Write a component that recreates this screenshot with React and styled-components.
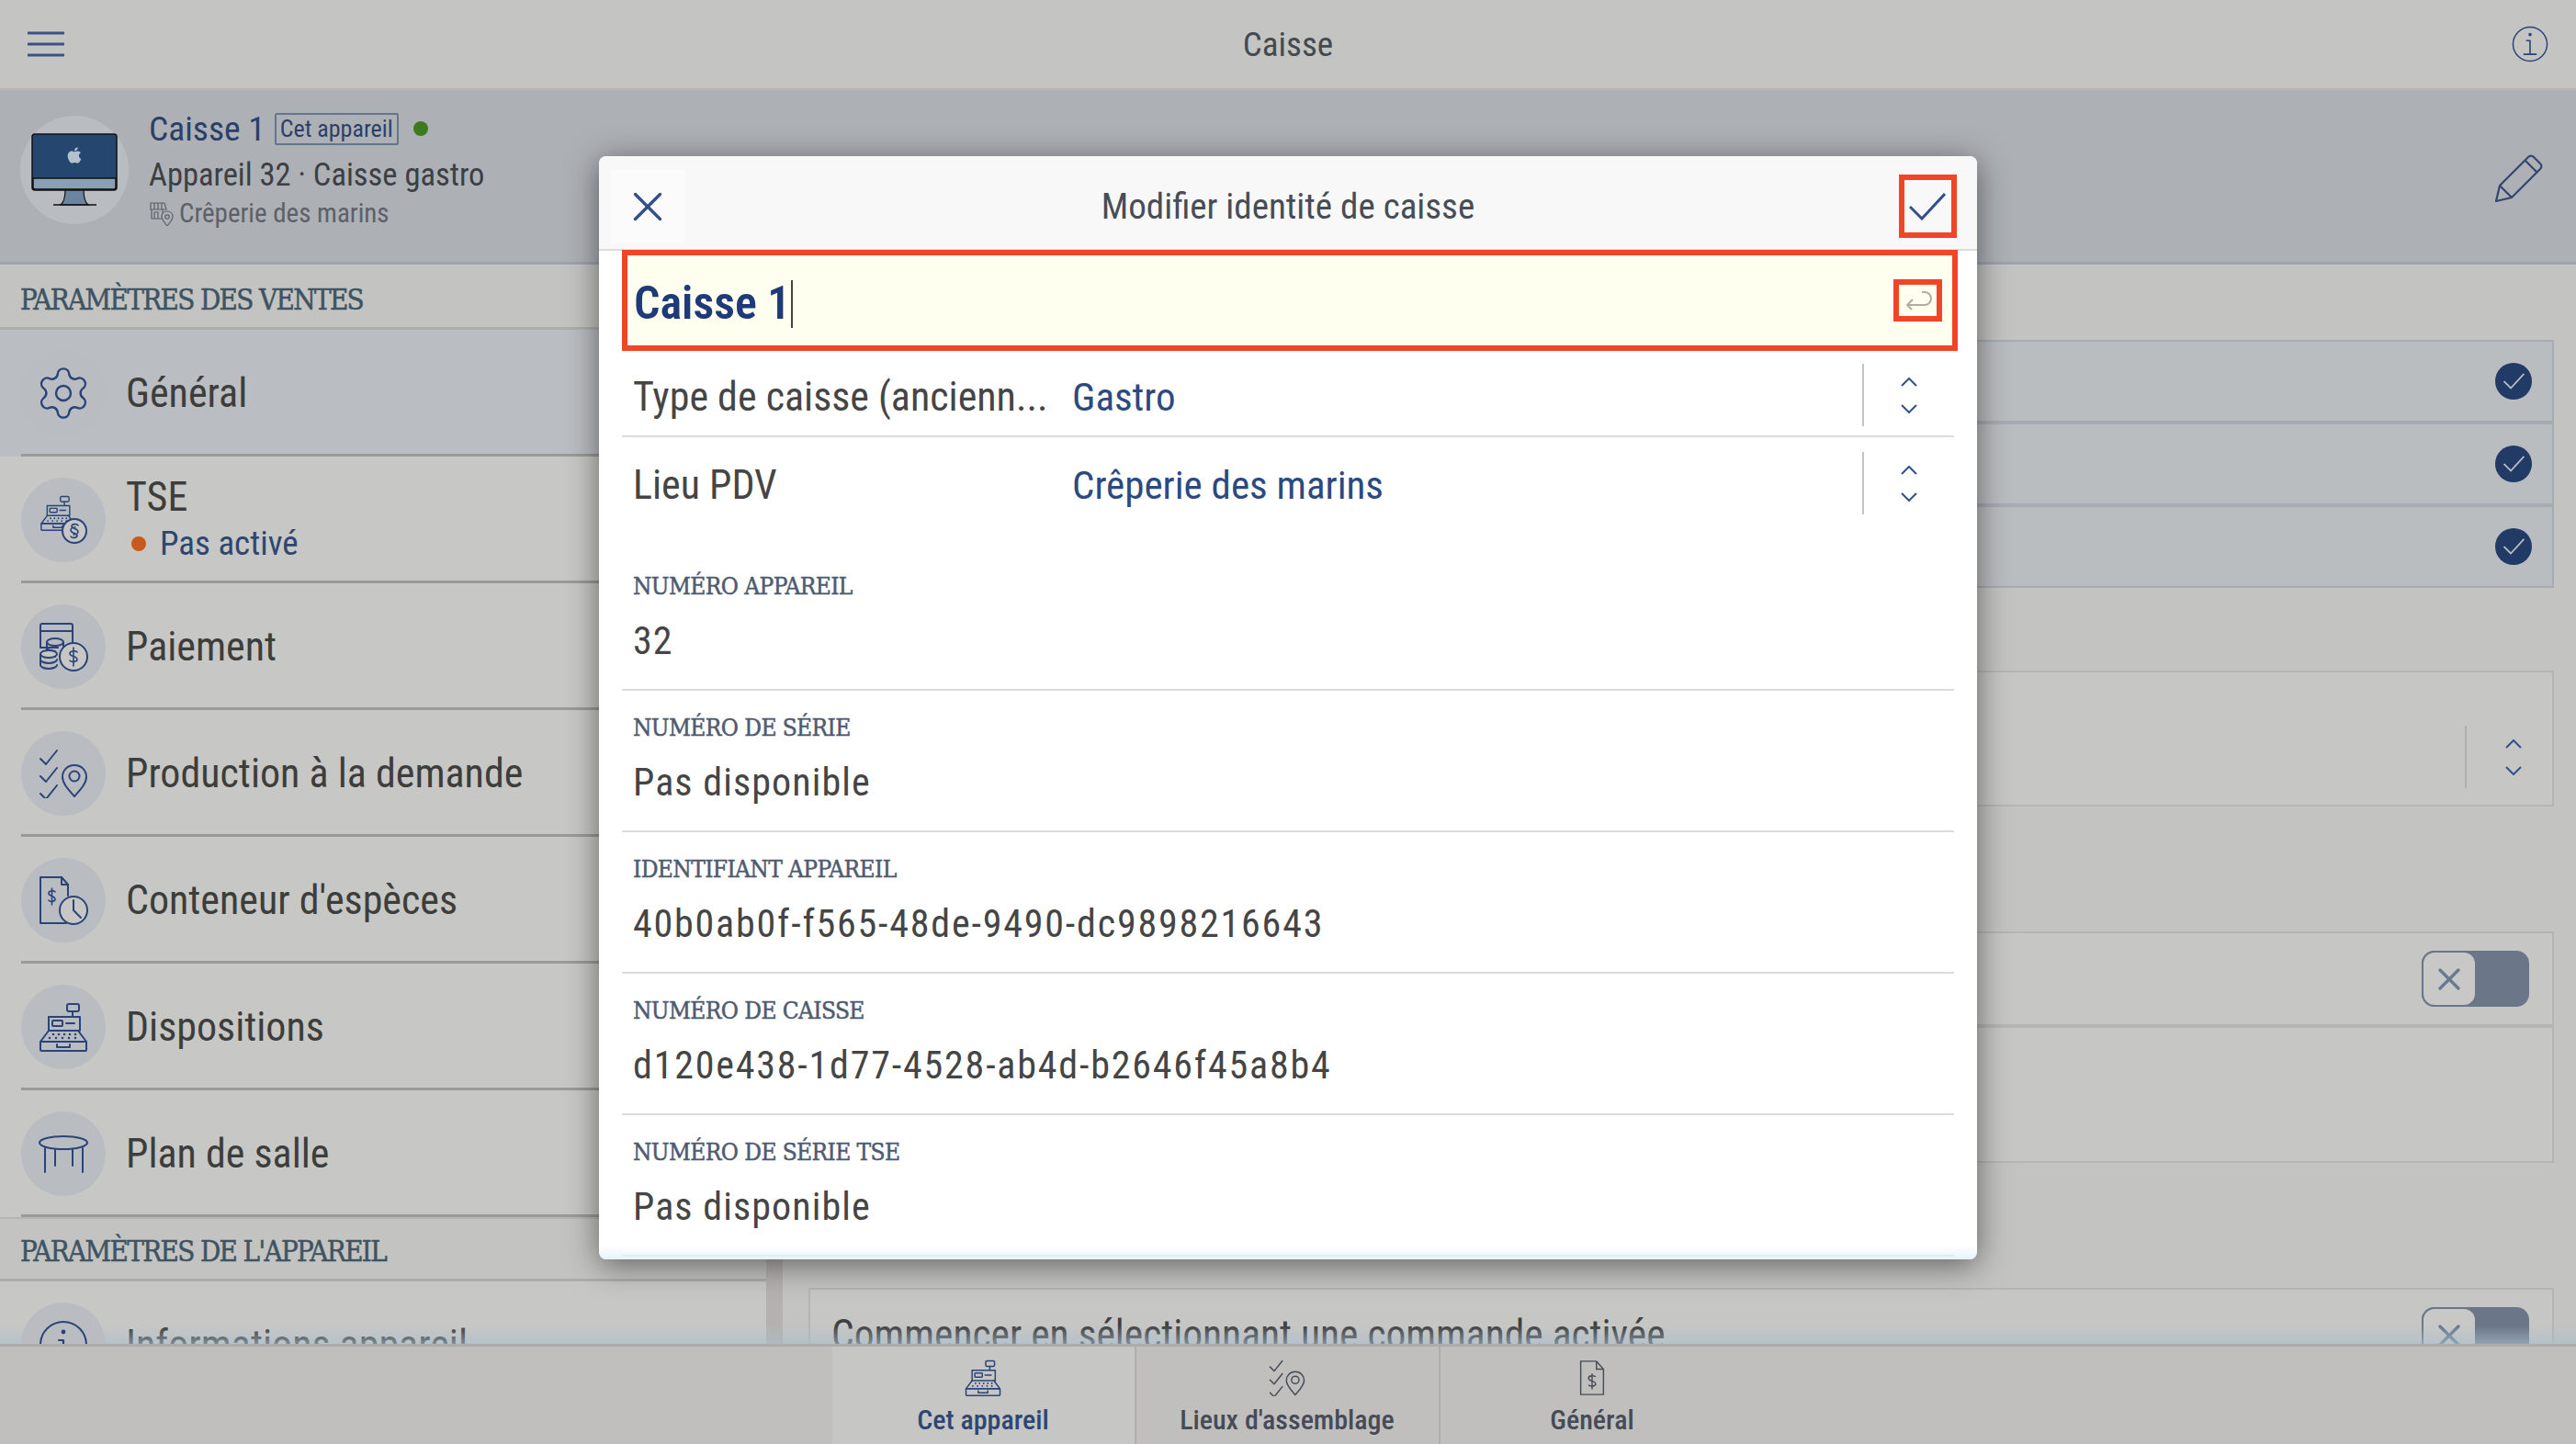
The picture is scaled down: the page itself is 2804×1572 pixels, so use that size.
import React from 'react'
import styled, { createGlobalStyle } from 'styled-components'
import { Settings, X } from 'lucide-react'
import { FaApple } from 'react-icons/fa'

const NAVY = '#2a4478'
const SERIF = '"DejaVu Serif Condensed", "DejaVu Serif", serif'

const GlobalStyle = createGlobalStyle`
  html, body { margin: 0; padding: 0; background: #c3c3c1; }
  body {
    font-family: "Roboto", "Open Sans", sans-serif;
    font-stretch: 75%;
    color: #3f3f3d;
  }
  * { box-sizing: border-box; }
`

const Page = styled.div`
  position: relative;
  width: 2804px;
  height: 1572px;
  display: flex;
  flex-direction: column;
  overflow: hidden;
`

const TopBar = styled.header`
  height: 99px;
  flex: none;
  display: flex;
  align-items: center;
  justify-content: space-between;
  padding: 0 30px;
  background: #c4c4c2;
  border-bottom: 3px solid #b6b4b2;
`
const TopTitle = styled.div`
  font-size: 37px;
  color: #454a50;
`

const DeviceHeader = styled.section`
  height: 189px;
  flex: none;
  display: flex;
  align-items: flex-start;
  justify-content: space-between;
  padding: 27px 36px 0 22px;
  background: #adb0b5;
  border-bottom: 3px solid #9ea3ad;
`
const DeviceInfo = styled.div`
  display: flex;
  gap: 22px;
`
const AvatarBig = styled.div`
  width: 118px;
  height: 118px;
  border-radius: 50%;
  background: #b9bcc1;
`
const DeviceText = styled.div`
  display: flex;
  flex-direction: column;
  margin-top: -11px;
`
const NameLine = styled.div`
  display: flex;
  align-items: center;
  gap: 10px;
  height: 50px;
`
const DeviceName = styled.span`
  font-size: 37.500px;
  color: #2c3f69;
`
const Badge = styled.span`
  height: 35px;
  width: 135px;
  display: flex;
  align-items: center;
  justify-content: center;
  font-size: 26px;
  color: #2c3f69;
  border: 2px solid #62778c;
  border-radius: 2px;
`
const Dot = styled.span`
  width: 16px;
  height: 16px;
  flex: none;
  margin-left: 6px;
  border-radius: 50%;
  background: ${p => p.$color};
`
const DeviceSub = styled.div`
  font-size: 34.500px;
  line-height: 50px;
  color: #3c3f44;
`
const DevicePlace = styled.div`
  display: flex;
  align-items: center;
  gap: 6px;
  font-size: 29px;
  line-height: 34px;
  color: #5c6169;
`
const PencilSlot = styled.div`
  margin-top: 42px;
`

const Main = styled.main`
  flex: 1;
  min-height: 0;
  display: flex;
  overflow: hidden;
`
const Sidebar = styled.nav`
  width: 834px;
  flex: none;
  background: #c7c7c5;
`
const SectionHead = styled.div`
  height: ${p => p.$h}px;
  display: flex;
  align-items: center;
  padding: ${p => p.$shift}px 0 0 22px;
  font-family: ${SERIF};
  font-stretch: normal;
  font-size: 31px;
  letter-spacing: -1.650px;
  -webkit-text-stroke: 0.5px #3e5462;
  color: #3e5462;
  background: #c3c3c1;
  border-top: ${p => (p.$top ? '2px solid #b5b5b3' : 'none')};
  border-bottom: 3px solid #adadab;
`
const MenuRow = styled.div`
  height: 138px;
  display: flex;
  align-items: center;
  gap: 22px;
  padding-left: 23px;
  background: ${p => (p.$selected ? '#babdc1' : 'transparent')};
`
const MenuInner = styled.div`
  flex: 1;
  align-self: stretch;
  display: flex;
  flex-direction: column;
  justify-content: center;
  margin-left: -114px;
  padding: 3px 0 0 114px;
  border-bottom: 3px solid #9a9a98;
`
const IconCircle = styled.div`
  position: relative;
  z-index: 1;
  width: 92px;
  height: 92px;
  flex: none;
  display: flex;
  align-items: center;
  justify-content: center;
  border-radius: 50%;
  background: #b9bdc2;
`
const MenuLabel = styled.div`
  font-size: 44px;
  font-weight: 450;
  line-height: 52px;
  color: #3d3d3b;
`
const MenuState = styled.div`
  display: flex;
  align-items: center;
  gap: 15px;
  font-size: 37px;
  line-height: 50px;
  color: #2f4670;
`

const ScrollGutter = styled.div`
  width: 18px;
  flex: none;
  background: #b4b2b0;
`
const Panel = styled.div`
  flex: 1;
  padding: 82px 24px 0 28px;
  display: flex;
  flex-direction: column;
  background: #c3c3c1;
`
const CardGroup = styled.div`
  display: flex;
  flex-direction: column;
  margin-bottom: ${p => p.$after}px;
`
const Card = styled.div`
  height: ${p => p.$h}px;
  flex: none;
  display: flex;
  align-items: center;
  justify-content: space-between;
  padding: 0 ${p => (p.$flush ? 0 : 22)}px 0 23px;
  background: ${p => (p.$selected ? '#babdbf' : '#c6c6c4')};
  border: 2px solid ${p => (p.$selected ? '#a7abb2' : '#b5b5b3')};
  font-size: 43.500px;
  color: #3f4042;
  white-space: nowrap;
`
const CheckedMark = styled.span`
  width: 40px;
  height: 40px;
  display: flex;
  align-items: center;
  justify-content: center;
  border-radius: 50%;
  background: #213a66;
`
const Toggle = styled.div`
  width: 117px;
  height: 61px;
  flex: none;
  margin-right: 3px;
  border-radius: 14px;
  background: #6b7688;
`
const ToggleKnob = styled.div`
  width: 60px;
  height: 61px;
  display: flex;
  align-items: center;
  justify-content: center;
  border: 2px solid #6b7688;
  border-radius: 14px;
  background: #c8c8c6;
  color: #687990;
`
const Picker = styled.div`
  width: 100px;
  height: 68px;
  flex: none;
  display: flex;
  flex-direction: column;
  align-items: center;
  justify-content: center;
  gap: 19px;
  border-left: 2px solid #c4c4c4;
`
const CardPicker = styled(Picker)`
  width: 95px;
  padding-left: 8px;
  align-self: flex-end;
  margin-bottom: 18px;
  border-left-color: #b0b0ae;
`

const BottomBar = styled.footer`
  position: relative;
  height: 109px;
  flex: none;
  display: flex;
  justify-content: center;
  background: #c0bfbd;
  border-top: 3px solid #aeacaa;
  &::before {
    content: '';
    position: absolute;
    left: 0;
    right: 0;
    top: -23px;
    height: 20px;
    background: linear-gradient(rgba(170, 190, 205, 0), rgba(170, 190, 205, 0.6));
  }
`
const Tab = styled.div`
  width: 331px;
  display: flex;
  flex-direction: column;
  align-items: center;
  padding-top: 14px;
  background: ${p => (p.$active ? '#c6c6c4' : 'transparent')};
  border-right: 2px solid #aeaeac;
  font-size: 30px;
  font-weight: 500;
  line-height: 52px;
  color: ${p => (p.$active ? '#2e4674' : '#454c58')};
  &:last-child { border-right: none; }
`

const Scrim = styled.div`
  position: absolute;
  inset: 0;
  display: flex;
  justify-content: center;
  align-items: flex-start;
  padding-top: 170px;
`
const Modal = styled.div`
  position: relative;
  width: 1500px;
  height: 1201px;
  display: flex;
  flex-direction: column;
  overflow: hidden;
  background: #fff;
  border-radius: 8px;
  box-shadow: 0 6px 34px rgba(0, 0, 0, 0.5);
  &::after {
    content: '';
    position: absolute;
    left: 0;
    right: 0;
    bottom: 0;
    height: 14px;
    background: linear-gradient(rgba(228, 243, 251, 0), #e4f3fb);
  }
`
const ModalHead = styled.div`
  height: 103px;
  flex: none;
  display: flex;
  align-items: center;
  justify-content: space-between;
  padding: 8px 22px 0 13px;
  background: #f8f8f8;
  border-bottom: 2px solid #dcdcdc;
`
const ModalTitle = styled.div`
  margin-right: 8px;
  font-size: 39px;
  color: #474d55;
`
const HeadButton = styled.div`
  width: 80px;
  height: 80px;
  display: flex;
  align-items: center;
  justify-content: center;
  background: #fbfbfb;
  color: #33508a;
`
const Marked = styled.div`
  width: 63px;
  height: 69px;
  display: flex;
  align-items: center;
  justify-content: center;
  border: 6px solid #f04526;
`
const NameInput = styled.div`
  height: 110px;
  flex: none;
  margin: -1px 21px 0 25px;
  display: flex;
  align-items: center;
  justify-content: space-between;
  padding: 0 9px 0 7px;
  background: #ffffef;
  border: 6px solid #f04526;
  font-size: 50px;
  font-weight: 600;
  color: #1f3a78;
`
const InputText = styled.span`
  padding-top: 5px;
`
const Caret = styled.span`
  display: inline-block;
  width: 2px;
  height: 52px;
  margin-left: 1px;
  vertical-align: -10px;
  background: #444;
`
const ReturnMark = styled.div`
  width: 53px;
  height: 46px;
  display: flex;
  align-items: center;
  justify-content: center;
  border: 6px solid #f04526;
  margin-right: 2px;
`
const SelectRow = styled.div`
  height: ${p => p.$h}px;
  flex: none;
  margin: 0 25px;
  padding: ${p => p.$pad}px 0 0 12px;
  display: flex;
  align-items: flex-start;
  border-bottom: ${p => (p.$line ? '2px solid #dcdcdc' : 'none')};
`
const SelectLabel = styled.div`
  width: 478px;
  flex: none;
  font-size: 44px;
  font-weight: 450;
  line-height: 72px;
  white-space: nowrap;
  color: #454545;
`
const SelectValue = styled.div`
  flex: 1;
  font-size: 43px;
  line-height: 72px;
  color: #2c4a80;
`
const Field = styled.div`
  height: 154px;
  flex: none;
  margin: 0 25px;
  padding: 21px 0 0 12px;
  border-bottom: 2px solid #dcdcdc;
`
const FieldLabel = styled.div`
  height: 38px;
  font-family: ${SERIF};
  font-stretch: normal;
  font-size: 26px;
  line-height: 38px;
  letter-spacing: -0.600px;
  -webkit-text-stroke: 0.5px #4f5b70;
  color: #4f5b70;
`
const FieldValue = styled.div`
  margin-top: 18px;
  font-size: 42px;
  line-height: 46px;
  letter-spacing: ${p => (p.$code ? 1.8 : 1.1)}px;
  color: #454545;
`

// small line icons, all on a 54 grid
const Line = ({ size = 54, children, color = NAVY }) => (
  <svg width={size} height={size} viewBox="0 0 54 54" fill="none" stroke={color} strokeWidth="2" strokeLinecap="round" strokeLinejoin="round">
    {children}
  </svg>
)

const Register = () => (
  <g>
    <rect x="31" y="2" width="13" height="8" rx="2" />
    <path d="M37 10v6" />
    <path d="M11 16h34v15H11z" />
    <rect x="15" y="20" width="11" height="6" rx="1" />
    <path d="M30 23h9" />
    <path d="M11 31L2 43h50l-9-12" />
    <path d="M16 35h0M22 35h0M28 35h0M34 35h0M40 35h0M12 39h0M19 39h0M26 39h0M33 39h0M40 39h0" strokeWidth="2.6" />
    <rect x="2" y="43" width="50" height="10" rx="1" />
    <path d="M20 46v3h14v-3" />
  </g>
)
const Checks = () => (
  <g>
    <path d="M2 11l6 6L20 2M2 30l6 6 12-15M2 49l6 6 12-15" />
    <path d="M39 22c-8 0-13 6-13 13 0 7 7 14 13 21 6-7 13-14 13-21 0-7-5-13-13-13z" transform="translate(0 -4)" />
    <circle cx="39" cy="30" r="5.5" />
  </g>
)
const IconTse = () => (
  <Line>
    <g transform="scale(.72) translate(2 0)"><Register /></g>
    <circle cx="39" cy="39" r="13" fill="#c7c7c5" />
    <path d="M43 33c-1-2-7-2-7 1 0 3 7 2 7 6 0 2-3 3-5 3M35 45c1 2 7 2 7-1 0-3-7-2-7-6 0-2 3-3 5-3" strokeWidth="1.6" />
  </Line>
)
const IconPay = () => (
  <Line>
    <path d="M21 28H2V4a2 2 0 0 1 2-2h31a2 2 0 0 1 2 2v21M2 10h35" />
    <ellipse cx="18" cy="22" rx="9" ry="4" />
    <path d="M9 22v12c0 2 4 4 9 4M27 22v6M9 28c0 2 4 4 9 4" />
    <ellipse cx="11" cy="35" rx="9" ry="4" fill="#c7c7c5" />
    <path d="M2 35v12c0 2 4 4 9 4s9-2 9-4M2 41c0 2 4 4 9 4s9-2 9-4" />
    <circle cx="38" cy="38" r="15" fill="#c7c7c5" />
    <path d="M42 33c-1-2-8-2-8 1.500 0 4 8 2 8 6.500 0 3-7 3-8 1M38 28v20" strokeWidth="1.6" />
  </Line>
)
const IconCash = () => (
  <Line>
    <path d="M30 52H2V2h23l7 8v12" />
    <path d="M25 2v8h7" />
    <path d="M18 18c-1-2-7-2-7 1.500 0 4 7 2 7 6.500 0 3-6 3-7 1M14.500 14v18" strokeWidth="1.6" />
    <circle cx="38" cy="38" r="15" fill="#c7c7c5" />
    <path d="M38 27v11l8 8" />
  </Line>
)
const IconTable = () => (
  <Line>
    <ellipse cx="27" cy="15" rx="26" ry="7" />
    <path d="M7 21v26M48 21v26M18 22v18M37 22v18" />
  </Line>
)
const IconInfo = ({ size = 54 }) => (
  <Line size={size}>
    <circle cx="27" cy="27" r="25" />
    <path d="M27 22v20M18 42h18M22 22h5" strokeWidth="2.2" />
    <circle cx="27" cy="13" r="1.400" fill={NAVY} />
  </Line>
)
const Store = () => (
  <svg width="27" height="27" viewBox="0 0 27 27" fill="none" stroke="#5c6169" strokeWidth="1.200">
    <path d="M2 9V2h15l2 7zM2 9h17M6 2v7M10 2v7M14 2v7" />
    <path d="M3 9v10h12V9M6 19v-7h4v7" />
    <path d="M20 11c-4 0-6 3-6 6s3 6 6 10c3-4 6-7 6-10s-2-6-6-6z" fill="#adb0b5" />
    <circle cx="20" cy="17" r="2.200" />
  </svg>
)
const Monitor = () => (
  <svg width="118" height="118" viewBox="0 0 118 118">
    <path d="M49 80h20c0 8 1 14 5 17H44c4-3 5-9 5-17z" fill="#6a85a0" stroke="#111" strokeWidth="1.200" />
    <path d="M36 97h47" stroke="#111" strokeWidth="1.500" />
    <rect x="13" y="20" width="92" height="61" rx="3" fill="#24466f" stroke="#111" strokeWidth="1.500" />
    <path d="M14 68h90v10a2 2 0 0 1-2 2H16a2 2 0 0 1-2-2z" fill="#87a0b2" stroke="#111" strokeWidth="1.500" />
    <FaApple x="49" y="33" size={20} color="#b4c2ce" />
  </svg>
)
const Pencil = () => (
  <svg width="52" height="52" viewBox="0 0 52 52" fill="none" stroke="#33466f" strokeWidth="2.200" strokeLinejoin="round">
    <path d="M1 51l4-17L36 3a4 4 0 0 1 6 0l7 7a4 4 0 0 1 0 6L18 47z" />
    <path d="M5 34l13 13M33 7l13 13" />
  </svg>
)
const Menu = () => (
  <svg width="40" height="28" viewBox="0 0 40 28" stroke="#3a5384" strokeWidth="3" strokeLinecap="round">
    <path d="M1 2h38M1 14h38M1 26h38" />
  </svg>
)
const ReturnIcon = () => (
  <svg width="30" height="22" viewBox="0 0 30 22" fill="none" stroke="#b0ad9f" strokeWidth="2">
    <path d="M19 2h3a6 6 0 0 1 0 14H3M9 10l-6 6 5 5" />
  </svg>
)
const DocIcon = () => (
  <svg width="30" height="42" viewBox="0 0 30 42" fill="none" stroke="#454c58" strokeWidth="1.500">
    <path d="M2 2h18l8 9v29H2zM20 2v9h8" />
    <path d="M19 20c-1-2-8-2-8 1.500 0 4 8 2 8 6.500 0 3-7 3-8 1M15 16v18" />
  </svg>
)
const ThinCheck = ({ w, h, color, weight }) => (
  <svg width={w} height={h} viewBox="0 0 40 30" fill="none" stroke={color} strokeWidth={weight}>
    <path d="M1 15l13 13L39 1" />
  </svg>
)
const Chevrons = () => (
  <>
    <svg width="18" height="10" viewBox="0 0 18 10" fill="none" stroke="#33508a" strokeWidth="2"><path d="M1 9l8-8 8 8" /></svg>
    <svg width="18" height="10" viewBox="0 0 18 10" fill="none" stroke="#33508a" strokeWidth="2"><path d="M1 1l8 8 8-8" /></svg>
  </>
)

const salesItems = [
  { label: 'Général', icon: <Settings size={64} strokeWidth={0.9} color={NAVY} />, selected: true },
  { label: 'TSE', icon: <IconTse />, state: 'Pas activé' },
  { label: 'Paiement', icon: <IconPay /> },
  { label: 'Production à la demande', icon: <Line><Checks /></Line> },
  { label: "Conteneur d'espèces", icon: <IconCash /> },
  { label: 'Dispositions', icon: <Line><Register /></Line> },
  { label: 'Plan de salle', icon: <IconTable /> },
]

const fields = [
  ['NUMÉRO APPAREIL', '32'],
  ['NUMÉRO DE SÉRIE', 'Pas disponible'],
  ['IDENTIFIANT APPAREIL', '40b0ab0f-f565-48de-9490-dc9898216643', true],
  ['NUMÉRO DE CAISSE', 'd120e438-1d77-4528-ab4d-b2646f45a8b4', true],
  ['NUMÉRO DE SÉRIE TSE', 'Pas disponible'],
]

function SideItem({ item }) {
  return (
    <MenuRow $selected={item.selected}>
      <IconCircle>{item.icon}</IconCircle>
      <MenuInner>
        <MenuLabel>{item.label}</MenuLabel>
        {item.state && (
          <MenuState><Dot $color="#c85a1e" />{item.state}</MenuState>
        )}
      </MenuInner>
    </MenuRow>
  )
}

export default function App() {
  return (
    <Page>
      <GlobalStyle />
      <TopBar>
        <Menu />
        <TopTitle>Caisse</TopTitle>
        <IconInfo size={40} />
      </TopBar>
      <DeviceHeader>
        <DeviceInfo>
          <AvatarBig><Monitor /></AvatarBig>
          <DeviceText>
            <NameLine>
              <DeviceName>Caisse 1</DeviceName>
              <Badge>Cet appareil</Badge>
              <Dot $color="#3d7a1e" />
            </NameLine>
            <DeviceSub>Appareil 32 · Caisse gastro</DeviceSub>
            <DevicePlace><Store />Crêperie des marins</DevicePlace>
          </DeviceText>
        </DeviceInfo>
        <PencilSlot><Pencil /></PencilSlot>
      </DeviceHeader>
      <Main>
        <Sidebar>
          <SectionHead $h={71} $shift={8}>PARAMÈTRES DES VENTES</SectionHead>
          {salesItems.map(item => <SideItem key={item.label} item={item} />)}
          <SectionHead $h={70} $shift={4} $top>PARAMÈTRES DE L'APPAREIL</SectionHead>
          <SideItem item={{ label: 'Informations appareil', icon: <IconInfo /> }} />
        </Sidebar>
        <ScrollGutter />
        <Panel>
          <CardGroup $after={90}>
            {[0, 1, 2].map(i => (
              <Card key={i} $h={90} $selected>
                <span />
                <CheckedMark><ThinCheck w={23} h={18} color="#bcc0c3" weight={3} /></CheckedMark>
              </Card>
            ))}
          </CardGroup>
          <CardGroup $after={136}>
            <Card $h={148} $flush>
              <span />
              <CardPicker><Chevrons /></CardPicker>
            </Card>
          </CardGroup>
          <CardGroup $after={136}>
            <Card $h={103}>
              <span />
              <Toggle><ToggleKnob><X size={40} strokeWidth={2} /></ToggleKnob></Toggle>
            </Card>
            <Card $h={149} />
          </CardGroup>
          <CardGroup>
            <Card $h={103}>
              Commencer en sélectionnant une commande activée
              <Toggle><ToggleKnob><X size={40} strokeWidth={2} /></ToggleKnob></Toggle>
            </Card>
          </CardGroup>
        </Panel>
      </Main>
      <BottomBar>
        <Tab $active>
          <Line size={42}><Register /></Line>
          Cet appareil
        </Tab>
        <Tab>
          <Line size={42} color="#454c58"><Checks /></Line>
          Lieux d'assemblage
        </Tab>
        <Tab>
          <DocIcon />
          Général
        </Tab>
      </BottomBar>
      <Scrim>
        <Modal>
          <ModalHead>
            <HeadButton><X size={54} strokeWidth={1.5} /></HeadButton>
            <ModalTitle>Modifier identité de caisse</ModalTitle>
            <Marked><ThinCheck w={40} h={30} color="#33508a" weight={3} /></Marked>
          </ModalHead>
          <NameInput>
            <InputText>Caisse 1<Caret /></InputText>
            <ReturnMark><ReturnIcon /></ReturnMark>
          </NameInput>
          <SelectRow $h={94} $pad={14} $line>
            <SelectLabel>Type de caisse (ancienn...</SelectLabel>
            <SelectValue>Gastro</SelectValue>
            <Picker><Chevrons /></Picker>
          </SelectRow>
          <SelectRow $h={122} $pad={16}>
            <SelectLabel>Lieu PDV</SelectLabel>
            <SelectValue>Crêperie des marins</SelectValue>
            <Picker><Chevrons /></Picker>
          </SelectRow>
          {fields.map(([label, value, code]) => (
            <Field key={label}>
              <FieldLabel>{label}</FieldLabel>
              <FieldValue $code={code}>{value}</FieldValue>
            </Field>
          ))}
        </Modal>
      </Scrim>
    </Page>
  )
}
